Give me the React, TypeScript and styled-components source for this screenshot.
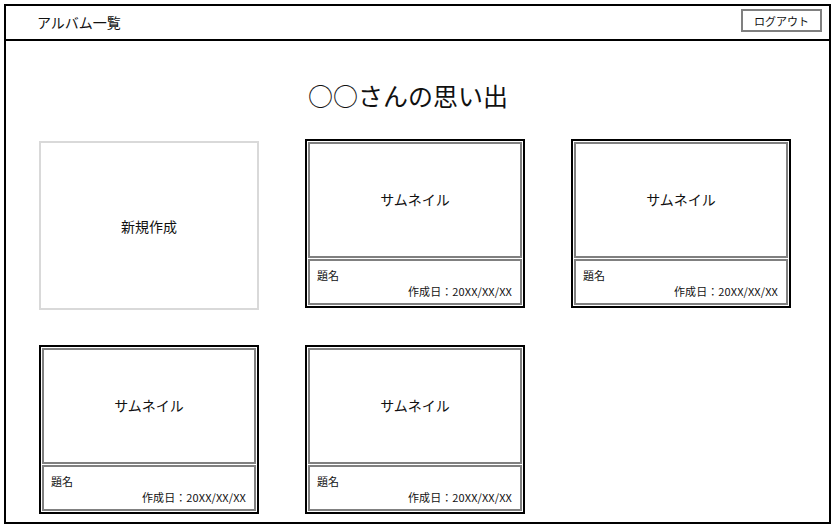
import React from "react";
import styled, { createGlobalStyle } from "styled-components";

const GlobalStyle = createGlobalStyle`
  html, body { margin: 0; padding: 0; background: #fff; }
  body {
    font-family: "Noto Sans CJK JP", "Noto Sans", sans-serif;
    color: #111;
  }
  * { box-sizing: border-box; }
`;

const Frame = styled.div`
  margin: 4px 0 0 4px;
  width: 827px;
  height: 520px;
  border: 2px solid #000;
  display: flex;
  flex-direction: column;
`;

const Header = styled.header`
  height: 35px;
  border-bottom: 2px solid #000;
  display: flex;
  align-items: center;
  justify-content: space-between;
  padding: 0 7px 4px 31px;
`;

const HeaderTitle = styled.div`
  font-size: 14px;
  line-height: 16px;
  padding-top: 2px;
`;

const LogoutButton = styled.button`
  width: 81px;
  height: 23px;
  border: 2px solid #808080;
  background: #fff;
  font-family: inherit;
  font-size: 11px;
  color: #111;
  padding: 0;
  display: flex;
  align-items: center;
  justify-content: center;
`;

const Main = styled.main`
  flex: 1;
  padding: 36px 0 0 33px;
`;

const PageTitle = styled.h1`
  margin: 0 0 26px;
  font-size: 25px;
  font-weight: 400;
  line-height: 36px;
  height: 36px;
  text-align: center;
  padding-right: 52px;
`;

const Grid = styled.div`
  display: grid;
  grid-template-columns: repeat(3, 220px);
  grid-auto-rows: 169px;
  column-gap: 46px;
  row-gap: 37px;
`;

const NewCard = styled.div`
  margin-top: 2px;
  height: 169px;
  border: 2px solid #d9d9d9;
  display: flex;
  align-items: center;
  justify-content: center;
  font-size: 14px;
`;

const Card = styled.div`
  border: 2px solid #000;
  padding: 1px;
  display: flex;
  flex-direction: column;
  gap: 1px;
`;

const Thumb = styled.div`
  height: 116px;
  border: 2px solid #808080;
  display: flex;
  align-items: center;
  justify-content: center;
  font-size: 14px;
  padding-bottom: 2px;
`;

const Info = styled.div`
  flex: 1;
  border: 2px solid #808080;
  padding: 7px 8px 1px 7px;
  display: flex;
  flex-direction: column;
  font-size: 11px;
  line-height: 15px;
`;

const InfoTitle = styled.div``;

const InfoDate = styled.div`
  text-align: right;
  line-height: 17px;
  letter-spacing: 0.1px;
`;

const albums = [1, 2, 3, 4];

export default function App() {
  return (
    <>
      <GlobalStyle />
      <Frame>
        <Header>
          <HeaderTitle>アルバム一覧</HeaderTitle>
          <LogoutButton>ログアウト</LogoutButton>
        </Header>
        <Main>
          <PageTitle>○○さんの思い出</PageTitle>
          <Grid>
            <NewCard>新規作成</NewCard>
            {albums.map((id) => (
              <Card key={id}>
                <Thumb>サムネイル</Thumb>
                <Info>
                  <InfoTitle>題名</InfoTitle>
                  <InfoDate>作成日：20XX/XX/XX</InfoDate>
                </Info>
              </Card>
            ))}
          </Grid>
        </Main>
      </Frame>
    </>
  );
}
